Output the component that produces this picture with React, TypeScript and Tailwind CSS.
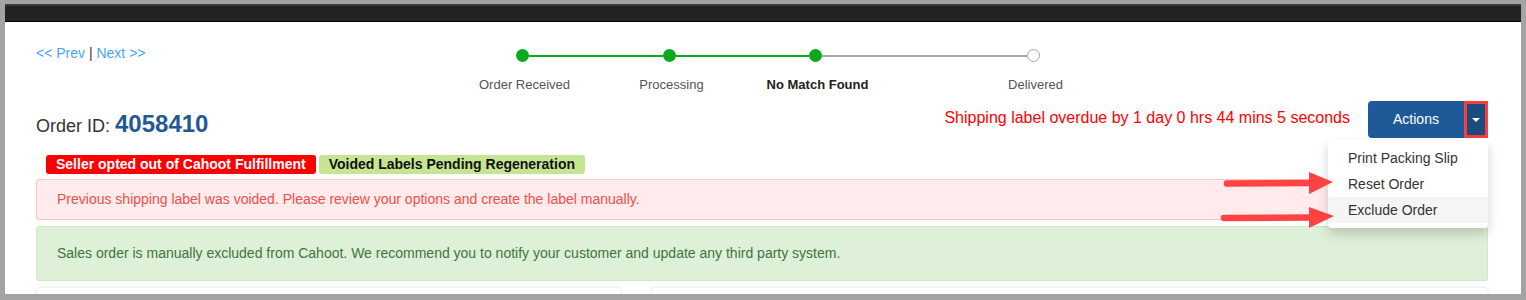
import React from 'react';

const steps = [
  { label: 'Order Received', done: true, line: 'w-[134px] bg-[#0ca81e]' },
  { label: 'Processing', done: true, line: 'w-[133px] bg-[#0ca81e]' },
  { label: 'No Match Found', done: true, current: true, line: 'w-[205px] bg-[#a6a6a6]' },
  { label: 'Delivered', done: false },
];

function Stepper() {
  return (
    <div className="mt-[5px] flex items-start">
      {steps.map((s) => (
        <React.Fragment key={s.label}>
          <div className="flex w-[13px] flex-col items-center">
            {s.done ? (
              <div className="h-[13px] w-[13px] shrink-0 rounded-full bg-[#0ca81e]" />
            ) : (
              <div className="h-[13px] w-[13px] shrink-0 rounded-full border-[1.5px] border-[#a6a6a6] bg-white" />
            )}
            <div
              className={
                s.current
                  ? 'ml-[4px] mt-[15px] whitespace-nowrap text-[13px] leading-[15px] font-bold text-[#222]'
                  : 'ml-[4px] mt-[15px] whitespace-nowrap text-[13px] leading-[15px] text-[#555]'
              }
            >
              {s.label}
            </div>
          </div>
          {s.line && <div className={`mt-[5.5px] h-[2px] shrink-0 ${s.line}`} />}
        </React.Fragment>
      ))}
    </div>
  );
}

function ActionsMenu() {
  return (
    <div className="relative flex h-[37px]">
      <button
        type="button"
        className="flex h-[37px] w-[96px] items-center justify-center rounded-l-[4px] bg-[#1e5a97] text-[14px] text-white"
      >
        Actions
      </button>
      <div className="flex h-[37px] w-[24px] items-center justify-center border-[3px] border-[#ff3b3b] bg-[#1b4c7f]">
        <div className="h-0 w-0 border-x-[4px] border-t-[4px] border-x-transparent border-t-white" />
      </div>
      <div className="absolute right-0 top-full z-10 mt-[2px] w-[160px] rounded-[4px] bg-white py-[5px] shadow-[0_6px_12px_rgba(0,0,0,0.175)]">
        <div className="h-[26px] px-[20px] text-[14px] leading-[26px] text-[#333]">Print Packing Slip</div>
        <div className="h-[26px] px-[20px] text-[14px] leading-[26px] text-[#333]">Reset Order</div>
        <div className="h-[26px] bg-[#f5f5f5] px-[20px] text-[14px] leading-[26px] text-[#333]">Exclude Order</div>
      </div>
    </div>
  );
}

export default function App() {
  return (
    <div
      className="h-[300px] w-[1526px] bg-[#a3a3a3] px-[5px] pt-[4px]"
      style={{ fontFamily: '"Liberation Sans", Arial, sans-serif' }}
    >
      <div className="relative h-[290px] overflow-hidden bg-white">
        <div className="h-[18px] border-t-2 border-b border-t-[#3c3c3c] border-b-black bg-[#222]" />

        <div className="pl-[31px] pr-[33px]">
          {/* nav + progress */}
          <div className="flex items-start pt-[22px]">
            <div className="mt-[1px] w-[480px] shrink-0 text-[14px] leading-[16px] text-[#333]">
              <a className="text-[#4aa3f5]">&lt;&lt; Prev</a> | <a className="text-[#4aa3f5]">Next &gt;&gt;</a>
            </div>
            <Stepper />
          </div>

          {/* order id + actions */}
          <div className="mt-[9px] flex items-start justify-between">
            <div className="mt-[9px] text-[18px] leading-[28px] text-[#333]">
              Order ID: <span className="text-[24px] font-bold text-[#1f5a96]">4058410</span>
            </div>
            <div className="flex items-center gap-[18px]">
              <div className="mb-[3px] text-[16px] leading-[20px] text-[#ff0000]">
                Shipping label overdue by 1 day 0 hrs 44 mins 5 seconds
              </div>
              <ActionsMenu />
            </div>
          </div>

          {/* badges */}
          <div className="ml-[10px] mt-[15px] flex gap-[3px]">
            <span className="h-[19px] rounded-[3px] bg-[#ff0000] px-[10px] text-[14px] font-bold leading-[19px] text-white">
              Seller opted out of Cahoot Fulfillment
            </span>
            <span className="h-[19px] rounded-[3px] bg-[#c5e593] px-[10px] text-[14px] font-bold leading-[19px] text-[#111]">
              Voided Labels Pending Regeneration
            </span>
          </div>

          {/* alerts */}
          <div className="mt-[5px] rounded-[3px] border border-[#f7c5c5] bg-[#ffebeb] px-[20px] py-[10px] text-[14px] leading-[19px] text-[#f04f4a]">
            Previous shipping label was voided. Please review your options and create the label manually.
          </div>
          <div className="mt-[6px] rounded-[3px] border border-[#d2e8c4] bg-[#dff0d8] px-[20px] py-[17px] text-[14px] leading-[19px] text-[#3c763d]">
            Sales order is manually excluded from Cahoot. We recommend you to notify your customer and update any third
            party system.
          </div>

          {/* cards below */}
          <div className="mt-[6px] flex gap-[29px]">
            <div className="h-[40px] w-[586px] rounded-[4px] border border-[#f1f1f1] bg-white shadow-[0_0_4px_rgba(0,0,0,0.07)]" />
            <div className="h-[40px] flex-1 rounded-[4px] border border-[#f1f1f1] bg-white shadow-[0_0_4px_rgba(0,0,0,0.07)]" />
          </div>
        </div>

        {/* annotation arrows */}
        <svg className="pointer-events-none absolute inset-0 z-20" width="1516" height="290">
          <g transform="translate(-5,-4)" fill="#ff4242" stroke="#ff4242">
            <line x1="1227" y1="183.5" x2="1312" y2="183" strokeWidth="6.5" strokeLinecap="round" />
            <polygon points="1309,172 1333,182 1309,194" stroke="none" />
            <line x1="1224" y1="218" x2="1312" y2="217.5" strokeWidth="6.5" strokeLinecap="round" />
            <polygon points="1309,207 1334,216 1309,228" stroke="none" />
          </g>
        </svg>
      </div>
    </div>
  );
}
